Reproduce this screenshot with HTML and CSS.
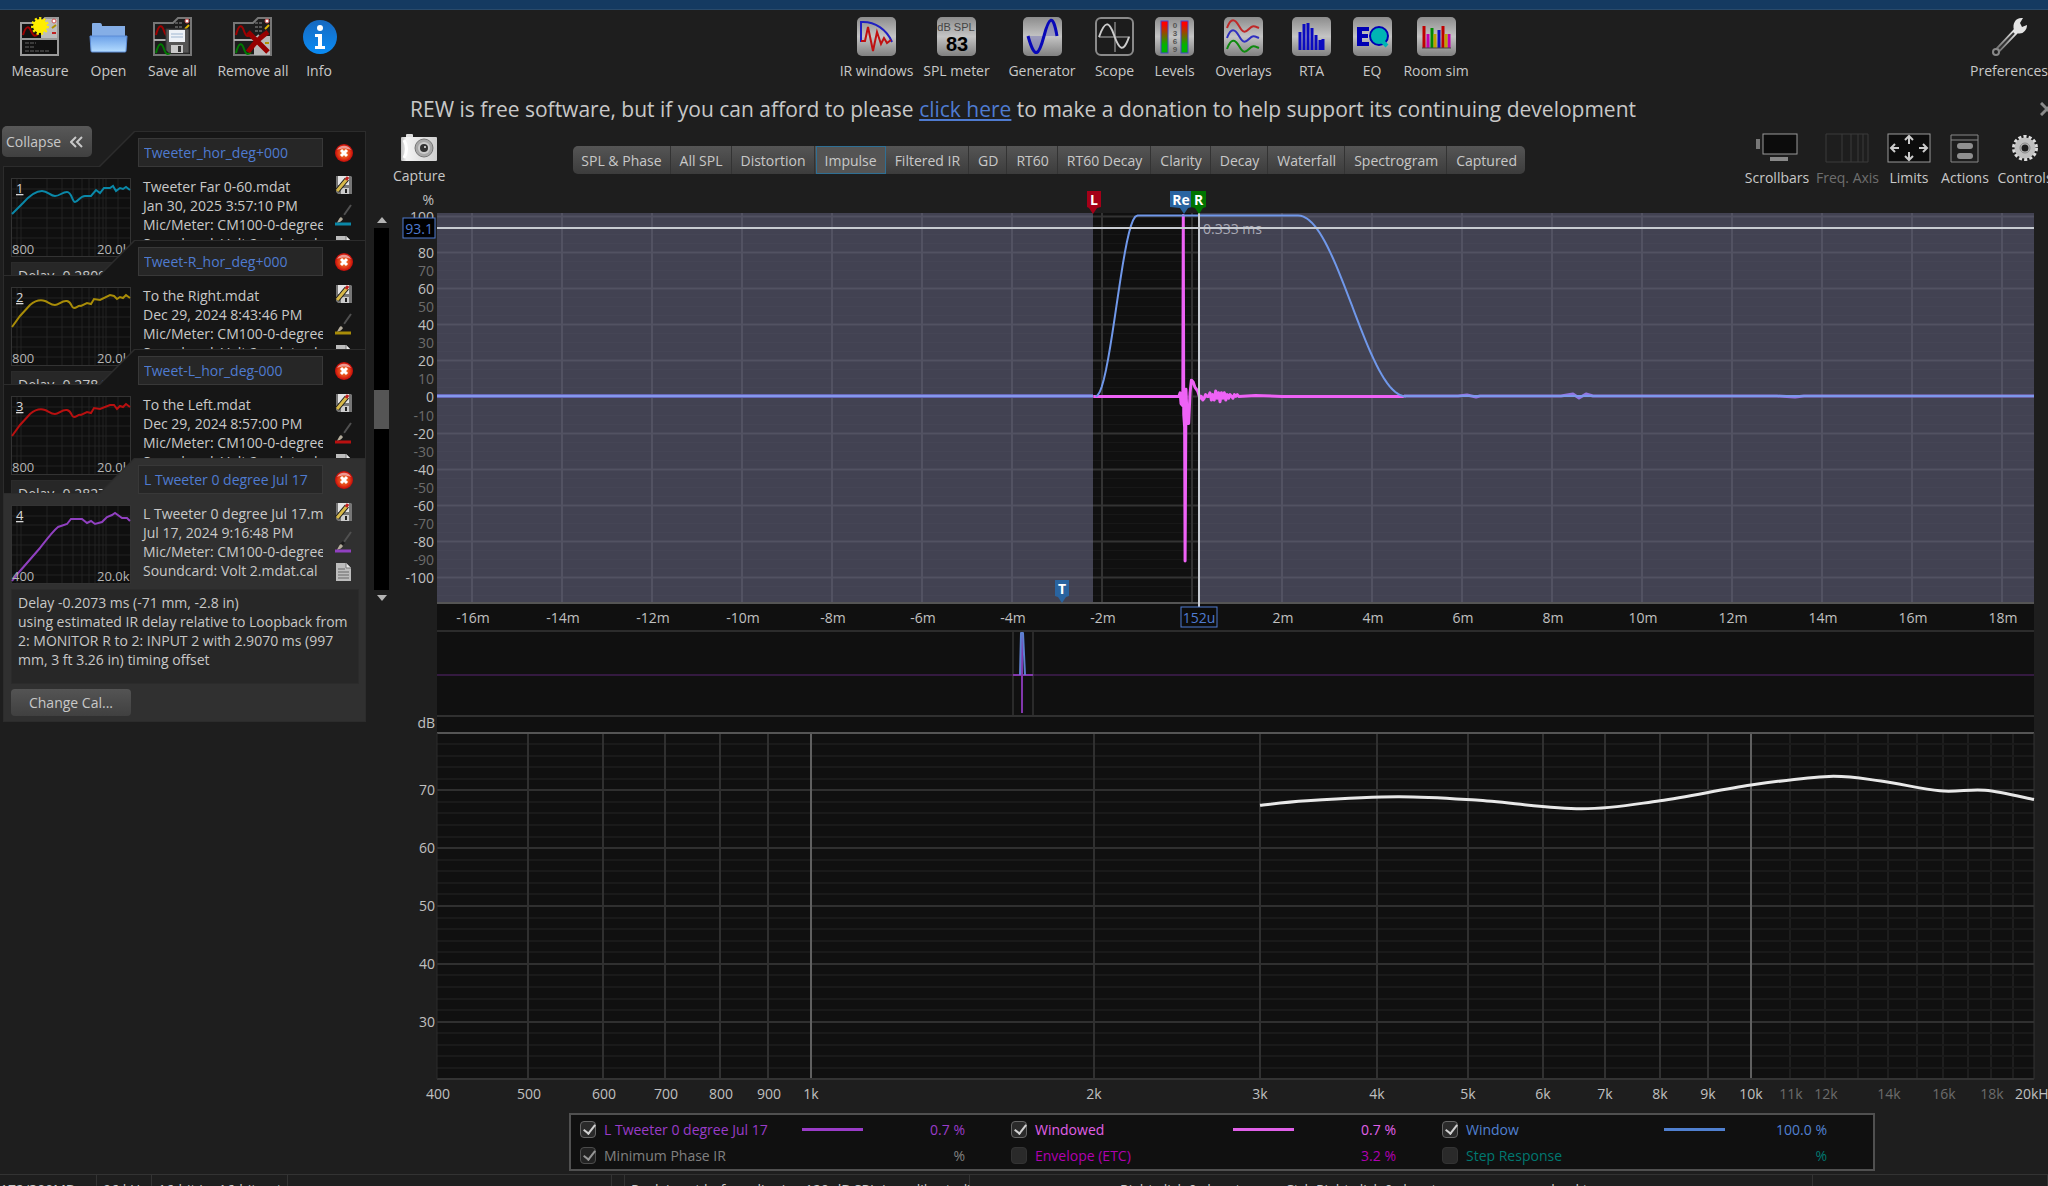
FILE: index.html
```html
<!DOCTYPE html>
<html lang="en">
<head>
    <meta charset="UTF-8">
    <meta name="viewport" content="width=device-width, initial-scale=1.0">
    <title>REW</title>
    <link rel="stylesheet" href="styles.css">
</head>
<body>

<!-- Shared gradients and icons -->
<svg class="defs" width="0" height="0" aria-hidden="true">
    <defs>
        <linearGradient id="metal" x1="0" y1="0" x2="0" y2="1">
            <stop offset="0" stop-color="#8c8c8c"/><stop offset="0.5" stop-color="#c4c4c4"/><stop offset="1" stop-color="#808080"/>
        </linearGradient>
        <linearGradient id="level" x1="0" y1="0" x2="0" y2="1">
            <stop offset="0.1" stop-color="#ff0000"/><stop offset="0.75" stop-color="#00b400"/>
        </linearGradient>
        <linearGradient id="folder" x1="0" y1="0" x2="0" y2="1">
            <stop offset="0" stop-color="#6ba0e8"/><stop offset="1" stop-color="#b4dcff"/>
        </linearGradient>
        <linearGradient id="infoBlue" x1="0" y1="0" x2="0" y2="1">
            <stop offset="0" stop-color="#1769c0"/><stop offset="1" stop-color="#0a8cf5"/>
        </linearGradient>
        <linearGradient id="steel" x1="1" y1="0" x2="0" y2="1">
            <stop offset="0" stop-color="#ffffff"/><stop offset="0.5" stop-color="#9a9a9a"/><stop offset="1" stop-color="#555555"/>
        </linearGradient>
        <linearGradient id="pad" x1="0" y1="0" x2="1" y2="0">
            <stop offset="0" stop-color="#bdbdbd"/><stop offset="0.15" stop-color="#f4f4f4"/><stop offset="1" stop-color="#d0d0d0"/>
        </linearGradient>
        <radialGradient id="redBall">
            <stop offset="0" stop-color="#f59a3a"/><stop offset="0.7" stop-color="#e03414"/><stop offset="1" stop-color="#c00a0a"/>
        </radialGradient>
    </defs>
    <symbol id="tile" viewBox="0 0 39 39"><rect width="39" height="39" rx="5" fill="url(#metal)"/></symbol>
    <symbol id="stack" viewBox="0 0 39 39">
        <path d="M1 38V6H20L25 1H38V38Z" fill="#1c1c1c" stroke="#777" stroke-width="2"/>
        <path d="M1 23H21L26 18" fill="none" stroke="#aaa" stroke-width="2"/>
        <path d="M3 18C6 6 9 8 11 14S15 20 18 17" fill="none" stroke="#a00000" stroke-width="2"/>
        <path d="M3 36C6 24 9 26 11 32S15 38 18 35" fill="none" stroke="#007a00" stroke-width="2"/>
        <path d="M22 6H29M22 10H29M22 14H29" stroke="#555" stroke-width="2" stroke-dasharray="3 1"/>
        <circle cx="34" cy="4" r="2" fill="#fff" stroke="#d05050"/>
        <path d="M32 12L36 8" stroke="#d8b000" stroke-width="2"/>
    </symbol>
    <symbol id="close" viewBox="0 0 18 18">
        <circle cx="9" cy="9" r="9" fill="url(#redBall)"/>
        <path d="M2 6A8 8 0 0 1 16 6C11 4 7 4 2 6Z" fill="#f0b0b0" opacity="0.8"/>
        <path d="M6 6L12 12M12 6L6 12" stroke="#fff" stroke-width="3"/>
    </symbol>
    <symbol id="save" viewBox="0 0 18 18">
        <path d="M1 0H16L17 1V18H3L1 16Z" fill="#777"/>
        <rect x="3" y="0" width="11" height="9" fill="#e4e4e4"/>
        <rect x="6" y="12" width="8" height="6" fill="#ccc"/><rect x="10" y="13" width="2" height="4" fill="#222"/>
        <path d="M2 15L12 3" stroke="#1c1c1c" stroke-width="5"/><path d="M2 15L12 3" stroke="#d6b84a" stroke-width="3"/>
        <path d="M11 4L13 1" stroke="#c02020" stroke-width="3"/>
    </symbol>
    <symbol id="pen" viewBox="0 0 18 22">
        <path d="M16 1L9 11" stroke="#505050" stroke-width="2"/><path d="M9 11L6 14" stroke="#1a1a1a" stroke-width="3"/>
        <path d="M6 13C4 14 3 17 2 19C5 18 7 17 8 15Z" fill="#b5ad9c"/>
        <path d="M0 20H16" stroke="currentColor" stroke-width="3"/>
    </symbol>
    <symbol id="doc" viewBox="0 0 18 18">
        <path d="M1 0H11L16 5V18H1Z" fill="#bcbcbc"/><path d="M11 0V5H16" fill="#e8e8e8" stroke="#777"/>
        <path d="M3 6H10M3 9H14M3 12H14M3 15H14" stroke="#666"/>
    </symbol>
    <symbol id="thumb-grid" viewBox="0 0 120 79">
        <rect width="120" height="79" fill="#0f0f0f"/>
        <path d="M6 0V79M10 0V79M36 0V79M51 0V79M62 0V79M71 0V79M78 0V79M84 0V79M88 0V79M92 0V79M95 0V79M107 0V79M0 11H120M0 20H120M0 30H120M0 40H120M0 50H120M0 60H120M0 70H120" stroke="#222" fill="none"/>
        <rect x="0" y="0" width="120" height="79" fill="none" stroke="#333" stroke-width="2"/>
    </symbol>
</svg>

<div class="app">
    <div class="titlebar"></div>

    <header class="toolbar">
        <div class="tools tools-file">
            <button class="tool">
                <svg width="39" height="39" viewBox="0 0 39 39">
                    <path d="M1 38V6H20L25 1H38V38Z" fill="#111" stroke="#9a9a9a" stroke-width="2"/>
                    <path d="M21 8L26 2H37V22H21Z" fill="#bdbdbd"/><path d="M1 22H38" stroke="#9a9a9a" stroke-width="2"/>
                    <path d="M3 18C6 8 9 9 11 14S15 20 18 17" fill="none" stroke="#a00000" stroke-width="2"/>
                    <path d="M5 26H16M5 30H14M5 34H30" stroke="#666" stroke-dasharray="4 1"/>
                    <circle cx="34" cy="4" r="2" fill="#fff" stroke="#d05050"/><path d="M32 11L36 8" stroke="#b09000" stroke-width="2"/><path d="M32 16H36" stroke="#c02020" stroke-width="2"/>
                    <circle cx="20" cy="9" r="7" fill="#ffee00"/><circle cx="20" cy="9" r="7" fill="none" stroke="#ffee00" stroke-width="4" stroke-dasharray="2 2"/>
                </svg>
                <span>Measure</span>
            </button>
            <button class="tool">
                <svg width="39" height="39" viewBox="0 0 39 39">
                    <path d="M3 20V7Q3 6 4 6H11Q13 6 13 9H36V20Z" fill="#85aee6"/>
                    <path d="M1 19H38L37 34Q37 35 36 35H3Q2 35 2 34Z" fill="url(#folder)" stroke="#5c8cd6"/>
                </svg>
                <span>Open</span>
            </button>
            <button class="tool">
                <svg width="39" height="39" viewBox="0 0 39 39">
                    <use href="#stack"/>
                    <path d="M13 12H35Q36 12 36 13V36H16L13 33Z" fill="#555" stroke="#333"/>
                    <rect x="16" y="13" width="16" height="12" fill="#eef2f7"/><path d="M18 17H30M18 20H30" stroke="#9fb6d0"/>
                    <rect x="18" y="28" width="12" height="8" fill="#c8c8c8"/><rect x="25" y="29" width="3" height="6" fill="#333"/>
                </svg>
                <span>Save all</span>
            </button>
            <button class="tool">
                <svg width="39" height="39" viewBox="0 0 39 39">
                    <use href="#stack"/><rect x="21" y="19" width="16" height="19" fill="#b8b8b8"/>
                    <path d="M32 26H36" stroke="#b09000" stroke-width="2"/>
                    <path d="M15 15L35 35M35 15C28 20 20 27 15 35" fill="none" stroke="#960000" stroke-width="5"/>
                </svg>
                <span>Remove all</span>
            </button>
            <button class="tool">
                <svg width="39" height="39" viewBox="0 0 39 39">
                    <circle cx="20" cy="20" r="17" fill="url(#infoBlue)"/>
                    <circle cx="20" cy="11" r="3" fill="#fff"/><path d="M15 17H22V29H25V32H15V29H18V20H15Z" fill="#fff"/>
                </svg>
                <span>Info</span>
            </button>
        </div>

        <div class="tools tools-main">
            <button class="tool">
                <svg width="39" height="39" viewBox="0 0 39 39"><use href="#tile"/>
                    <path d="M4 25V5C18 4 30 13 35 25" fill="none" stroke="#2020c0" stroke-width="2"/>
                    <path d="M4 24H8L11 10L16 34L20 15L24 27L27 21L30 26L34 23" fill="none" stroke="#c01010" stroke-width="2"/>
                </svg>
                <span>IR windows</span>
            </button>
            <button class="tool">
                <svg width="39" height="39" viewBox="0 0 39 39"><use href="#tile"/>
                    <text x="19" y="14" text-anchor="middle" class="icon-small">dB SPL</text>
                    <text x="20" y="34" text-anchor="middle" class="icon-big">83</text>
                </svg>
                <span>SPL meter</span>
            </button>
            <button class="tool">
                <svg width="39" height="39" viewBox="0 0 39 39"><use href="#tile"/>
                    <path d="M5 19H34C31 -4 26 0 21 19S12 44 5 19Z" fill="#8080b8" opacity="0.6"/>
                    <path d="M5 19C12 44 16 38 21 19S30 -4 34 19" fill="none" stroke="#0808b8" stroke-width="3"/>
                </svg>
                <span>Generator</span>
            </button>
            <button class="tool">
                <svg width="39" height="39" viewBox="0 0 39 39">
                    <rect x="1" y="1" width="37" height="37" rx="5" fill="#1c1c1c" stroke="#8a8a8a" stroke-width="2"/>
                    <path d="M20 5V35M4 20H35" stroke="#666" stroke-width="2"/>
                    <path d="M4 20C10 3 14 4 19 18S28 37 34 20" fill="none" stroke="#ccc" stroke-width="2"/>
                </svg>
                <span>Scope</span>
            </button>
            <button class="tool">
                <svg width="39" height="39" viewBox="0 0 39 39"><use href="#tile"/>
                    <rect x="6" y="4" width="7" height="32" fill="url(#level)" stroke="#4646c8"/>
                    <rect x="26" y="4" width="7" height="32" fill="url(#level)" stroke="#4646c8"/>
                    <text x="20" y="11" text-anchor="middle" class="icon-tiny">0</text>
                    <text x="20" y="19" text-anchor="middle" class="icon-tiny">3</text>
                    <text x="20" y="27" text-anchor="middle" class="icon-tiny">6</text>
                    <text x="20" y="35" text-anchor="middle" class="icon-tiny">9</text>
                </svg>
                <span>Levels</span>
            </button>
            <button class="tool">
                <svg width="39" height="39" viewBox="0 0 39 39"><use href="#tile"/>
                    <path d="M3 11C7 0 11 2 15 9S21 16 25 12S30 9 35 11" fill="none" stroke="#c02828" stroke-width="2"/>
                    <path d="M3 21C7 10 11 12 15 19S21 26 25 22S30 19 35 21" fill="none" stroke="#3030c0" stroke-width="2"/>
                    <path d="M3 32C7 21 11 22 15 29S21 36 25 32S30 29 35 31" fill="none" stroke="#108a10" stroke-width="2"/>
                </svg>
                <span>Overlays</span>
            </button>
            <button class="tool">
                <svg width="39" height="39" viewBox="0 0 39 39"><use href="#tile"/>
                    <path d="M8 33V15M12 33V7M16 33V6M20 33V11M24 33V18M28 33V23M31 33V22" stroke="#0a0ac0" stroke-width="3"/>
                </svg>
                <span>RTA</span>
            </button>
            <button class="tool">
                <svg width="39" height="39" viewBox="0 0 39 39"><use href="#tile"/>
                    <path d="M4 10H16V14H9V17H15V21H9V25H16V29H4Z" fill="#0000b4"/>
                    <circle cx="26" cy="19" r="9" fill="#00b4b4" stroke="#0000b4" stroke-width="2"/><path d="M28 23L34 29" stroke="#00b4b4" stroke-width="4"/>
                </svg>
                <span>EQ</span>
            </button>
            <button class="tool">
                <svg width="39" height="39" viewBox="0 0 39 39"><use href="#tile"/>
                    <path d="M7 31V9M26 31V9" stroke="#c00000" stroke-width="3"/><path d="M11 31V17M32 31V17" stroke="#c000b0" stroke-width="3"/>
                    <path d="M15 31V11" stroke="#008a00" stroke-width="3"/><path d="M18 31V17M29 31V17" stroke="#c0a000" stroke-width="3"/><path d="M22 31V13" stroke="#1010c0" stroke-width="3"/>
                    <path d="M5 31H34" stroke="#444"/>
                </svg>
                <span>Room sim</span>
            </button>
        </div>

        <button class="tool">
            <svg width="39" height="39" viewBox="0 0 39 39">
                <path d="M4 33L24 12L28 16L8 37Q5 39 3 37T4 33Z" fill="url(#steel)"/><path d="M9 32L24 16" stroke="#333" stroke-width="2"/>
                <path d="M24 13C22 6 26 0 33 1L30 6L32 10L37 8C37 14 32 18 27 16Z" fill="#e4e4e4"/>
                <circle cx="6" cy="35" r="3" fill="#1e1e1e" stroke="#888" stroke-width="2"/>
            </svg>
            <span>Preferences</span>
        </button>
    </header>

    <div class="donate">
        <p>REW is free software, but if you can afford to please <a href="#donate">click here</a> to make a donation to help support its continuing development</p>
        <button class="donate-close" aria-label="Close">
            <svg width="14" height="14" viewBox="0 0 14 14"><path d="M1 1L13 13M13 1L1 13" stroke="#8a8a8a" stroke-width="3"/></svg>
        </button>
    </div>

    <div class="workspace">
        <aside class="sidebar">
            <div class="measurements">
                <button class="collapse">Collapse
                    <svg width="14" height="12" viewBox="0 0 14 12"><path d="M6 1L1 6L6 11M12 1L7 6L12 11" fill="none" stroke="#c8c8c8" stroke-width="2"/></svg>
                </button>
                <div class="cards">
                    <section class="card card-blue">
                        <input class="card-title" type="text" value="Tweeter_hor_deg+000" aria-label="Measurement 1 name">
                        <button class="icon-btn card-close" aria-label="Remove measurement 1"><svg width="18" height="18"><use href="#close"/></svg></button>
                        <svg class="thumb" viewBox="0 0 120 79">
                            <use href="#thumb-grid"/>
                            <path class="curve" d="M1 36L12 25C20 16 25 13 31 13S39 18 44 18S51 14 56 14S61 24 64 24S69 18 74 18H80L85 12L89 15L93 10H99L102 8L105 13L109 10L112 11L115 9L119 12"/>
                            <text class="index" x="5" y="15">1</text><text x="1" y="76">800</text><text x="86" y="76">20.0k</text>
                        </svg>
                        <div class="card-info"><div>Tweeter Far 0-60.mdat</div><div>Jan 30, 2025 3:57:10 PM</div><div>Mic/Meter: CM100-0-degree</div><div>Soundcard: Volt 2.mdat.cal</div></div>
                        <div class="card-icons">
                            <button class="icon-btn" aria-label="Save"><svg width="18" height="18"><use href="#save"/></svg></button>
                            <button class="icon-btn" aria-label="Colour"><svg width="18" height="22"><use href="#pen"/></svg></button>
                            <button class="icon-btn" aria-label="Notes"><svg width="18" height="18"><use href="#doc"/></svg></button>
                        </div>
                        <div class="delay">Delay -0.2809</div>
                    </section>

                    <section class="card card-yellow">
                        <input class="card-title" type="text" value="Tweet-R_hor_deg+000" aria-label="Measurement 2 name">
                        <button class="icon-btn card-close" aria-label="Remove measurement 2"><svg width="18" height="18"><use href="#close"/></svg></button>
                        <svg class="thumb" viewBox="0 0 120 79">
                            <use href="#thumb-grid"/>
                            <path class="curve" d="M1 40L9 29L19 18C25 13 31 13 34 14S40 18 44 18S51 13 56 14S60 21 63 21S67 18 70 19L76 16L80 17L83 12L89 13L99 8L103 9L106 12L109 10L112 11L115 8L119 11"/>
                            <text class="index" x="5" y="15">2</text><text x="1" y="76">800</text><text x="86" y="76">20.0k</text>
                        </svg>
                        <div class="card-info"><div>To the Right.mdat</div><div>Dec 29, 2024 8:43:46 PM</div><div>Mic/Meter: CM100-0-degree</div><div>Soundcard: Volt 2.mdat.cal</div></div>
                        <div class="card-icons">
                            <button class="icon-btn" aria-label="Save"><svg width="18" height="18"><use href="#save"/></svg></button>
                            <button class="icon-btn" aria-label="Colour"><svg width="18" height="22"><use href="#pen"/></svg></button>
                            <button class="icon-btn" aria-label="Notes"><svg width="18" height="18"><use href="#doc"/></svg></button>
                        </div>
                        <div class="delay">Delay -0.2784</div>
                    </section>

                    <section class="card card-red">
                        <input class="card-title" type="text" value="Tweet-L_hor_deg-000" aria-label="Measurement 3 name">
                        <button class="icon-btn card-close" aria-label="Remove measurement 3"><svg width="18" height="18"><use href="#close"/></svg></button>
                        <svg class="thumb" viewBox="0 0 120 79">
                            <use href="#thumb-grid"/>
                            <path class="curve" d="M1 40L9 29L19 18C25 13 31 13 34 14S40 18 44 18S51 13 56 14S60 21 63 21S67 18 70 19L76 16L80 17L83 12L89 13L99 9L103 9L106 13L109 10L112 11L115 8L119 11"/>
                            <text class="index" x="5" y="15">3</text><text x="1" y="76">800</text><text x="86" y="76">20.0k</text>
                        </svg>
                        <div class="card-info"><div>To the Left.mdat</div><div>Dec 29, 2024 8:57:00 PM</div><div>Mic/Meter: CM100-0-degree</div><div>Soundcard: Volt 2.mdat.cal</div></div>
                        <div class="card-icons">
                            <button class="icon-btn" aria-label="Save"><svg width="18" height="18"><use href="#save"/></svg></button>
                            <button class="icon-btn" aria-label="Colour"><svg width="18" height="22"><use href="#pen"/></svg></button>
                            <button class="icon-btn" aria-label="Notes"><svg width="18" height="18"><use href="#doc"/></svg></button>
                        </div>
                        <div class="delay">Delay -0.2827</div>
                    </section>

                    <section class="card card-purple active">
                        <input class="card-title" type="text" value="L Tweeter 0 degree Jul 17" aria-label="Measurement 4 name">
                        <button class="icon-btn card-close" aria-label="Remove measurement 4"><svg width="18" height="18"><use href="#close"/></svg></button>
                        <svg class="thumb" viewBox="0 0 120 79">
                            <use href="#thumb-grid"/>
                            <path class="curve" d="M1 76L9 66L29 43C36 34 42 26 47 22L56 19L60 14H71L76 18L80 16L84 19L91 17L96 12L101 10L104 8L111 13H116L119 16"/>
                            <text class="index" x="5" y="15">4</text><text x="1" y="76">400</text><text x="86" y="76">20.0k</text>
                        </svg>
                        <div class="card-info"><div>L Tweeter 0 degree Jul 17.mdat</div><div>Jul 17, 2024 9:16:48 PM</div><div>Mic/Meter: CM100-0-degree</div><div>Soundcard: Volt 2.mdat.cal</div></div>
                        <div class="card-icons">
                            <button class="icon-btn" aria-label="Save"><svg width="18" height="18"><use href="#save"/></svg></button>
                            <button class="icon-btn" aria-label="Colour"><svg width="18" height="22"><use href="#pen"/></svg></button>
                            <button class="icon-btn" aria-label="Notes"><svg width="18" height="18"><use href="#doc"/></svg></button>
                        </div>
                        <div class="delay">Delay -0.2073 ms (-71 mm, -2.8 in)<br>using estimated IR delay relative to Loopback from<br>2: MONITOR R to 2: INPUT 2 with 2.9070 ms (997<br>mm, 3 ft 3.26 in) timing offset</div>
                        <button class="change-cal">Change Cal...</button>
                    </section>
                </div>
            </div>

            <div class="scroller">
                <svg width="10" height="6" viewBox="0 0 10 6"><path d="M0 6L5 0L10 6Z" fill="#b4b4b4"/></svg>
                <div class="track"><div class="handle"></div></div>
                <svg width="10" height="6" viewBox="0 0 10 6"><path d="M0 0L5 6L10 0Z" fill="#b4b4b4"/></svg>
            </div>
        </aside>

        <main class="main">
            <div class="graph-bar">
                <button class="tool capture">
                    <svg width="36" height="27" viewBox="0 0 36 27">
                        <path d="M5 3V1Q5 0 6 0H11Q12 0 12 1V3Z" fill="#ddd"/><rect x="0" y="3" width="36" height="24" rx="1" fill="url(#pad)"/>
                        <path d="M3 6Q8 15 3 24" fill="none" stroke="#fff" stroke-width="3"/>
                        <circle cx="23" cy="14" r="9" fill="#a8a8a8" stroke="#777"/><circle cx="23" cy="14" r="6" fill="#ccc"/><circle cx="23" cy="14" r="4" fill="#333"/><circle cx="24" cy="13" r="1" fill="#eee"/>
                    </svg>
                    <span>Capture</span>
                </button>

                <nav class="tabs">
                    <button>SPL &amp; Phase</button>
                    <button>All SPL</button>
                    <button>Distortion</button>
                    <button class="selected">Impulse</button>
                    <button>Filtered IR</button>
                    <button>GD</button>
                    <button>RT60</button>
                    <button>RT60 Decay</button>
                    <button>Clarity</button>
                    <button>Decay</button>
                    <button>Waterfall</button>
                    <button>Spectrogram</button>
                    <button>Captured</button>
                </nav>

                <div class="graph-tools">
                    <button class="tool">
                        <svg width="44" height="30" viewBox="0 0 44 30">
                            <rect x="8" y="1" width="34" height="20" fill="#0c0c0c" stroke="#999"/><rect x="1" y="6" width="4" height="10" fill="#777"/><rect x="15" y="24" width="18" height="4" fill="#888"/>
                        </svg>
                        <span>Scrollbars</span>
                    </button>
                    <button class="tool" disabled>
                        <svg width="44" height="30" viewBox="0 0 44 30"><path d="M1 1H43V29H1ZM17 1V29M26 1V29M33 1V29M38 1V29" fill="none" stroke="#3a3a3a"/></svg>
                        <span>Freq. Axis</span>
                    </button>
                    <button class="tool">
                        <svg width="44" height="30" viewBox="0 0 44 30">
                            <rect x="1" y="1" width="42" height="28" fill="#0c0c0c" stroke="#999"/>
                            <path d="M22 11V3M18 7L22 3L26 7M22 19V27M18 23L22 27L26 23M12 15H4M8 11L4 15L8 19M32 15H40M36 11L40 15L36 19" fill="none" stroke="#ccc" stroke-width="2"/>
                        </svg>
                        <span>Limits</span>
                    </button>
                    <button class="tool">
                        <svg width="30" height="30" viewBox="0 0 30 30">
                            <path d="M1 2H28V29H1ZM1 7H28" fill="none" stroke="#888"/><rect x="7" y="10" width="16" height="6" rx="3" fill="#909090"/><rect x="7" y="20" width="16" height="6" rx="3" fill="#909090"/>
                        </svg>
                        <span>Actions</span>
                    </button>
                    <button class="tool">
                        <svg width="30" height="30" viewBox="0 0 30 30">
                            <circle cx="15" cy="15" r="11" fill="none" stroke="#ddd" stroke-width="4" stroke-dasharray="3 2"/>
                            <circle cx="15" cy="15" r="7" fill="none" stroke="#c0c0c0" stroke-width="7"/><circle cx="15" cy="15" r="5" fill="none" stroke="#888" stroke-width="1"/>
                        </svg>
                        <span>Controls</span>
                    </button>
                </div>
            </div>

            <svg class="plot plot-impulse" id="impulse"></svg>
            <svg class="plot plot-overview" id="overview"></svg>
            <svg class="plot plot-response" id="response"></svg>

            <div class="legend">
                <div class="trace purple">
                    <label><input type="checkbox" checked>L Tweeter 0 degree Jul 17</label><span class="swatch"></span><output>0.7 %</output>
                </div>
                <div class="trace pink">
                    <label><input type="checkbox" checked>Windowed</label><span class="swatch"></span><output>0.7 %</output>
                </div>
                <div class="trace blue">
                    <label><input type="checkbox" checked>Window</label><span class="swatch"></span><output>100.0 %</output>
                </div>
                <div class="trace grey">
                    <label><input type="checkbox" checked>Minimum Phase IR</label><span></span><output>%</output>
                </div>
                <div class="trace magenta">
                    <label><input type="checkbox">Envelope (ETC)</label><span></span><output>3.2 %</output>
                </div>
                <div class="trace teal">
                    <label><input type="checkbox">Step Response</label><span></span><output>%</output>
                </div>
            </div>
        </main>
    </div>

    <footer class="status">
        <span>172/300MB</span>
        <span>96 kHz</span>
        <span>16-bit in, 16-bit out</span>
        <span></span>
        <span></span>
        <span>Peak input before clipping 120 dB SPL (uncalibrated)</span>
        <span class="hint">Right click &amp; drag to pan; Ctrl+Right click &amp; drag to zoom; mouse wheel to zoom;</span>
        <span></span>
    </footer>
</div>

<script src="graphs.js"></script>
</body>
</html>
```
FILE: styles.css
```css
* {
    box-sizing: border-box;
}
body {
    margin: 0;
    background-color: #1e1e1e;
    color: #c8c8c8;
    font-family: "Open Sans", "Noto Sans", sans-serif;
    font-size: 14px;
    line-height: 19px;
}
button, input {
    font: inherit;
    color: inherit;
}
button {
    padding: 0;
    border: none;
    background: none;
    white-space: nowrap;
}
svg {
    display: block;
}
.defs {
    position: absolute;
}
.app {
    display: flex;
    flex-direction: column;
    height: 100vh;
    overflow: hidden;
}
.titlebar {
    height: 10px;
    flex: none;
    background-color: #153a61;
    border-bottom: 1px solid #2a4a6a;
}

/* Main toolbar */
.toolbar {
    display: flex;
    flex: none;
    height: 82px;
    padding: 7px 0 0 10px;
}
.tools {
    display: grid;
}
.tools-file {
    grid-template-columns: 60px 77px 51px 110px 22px;
}
.tools-main {
    flex: 1;
    justify-content: center;
    grid-template-columns: 84px 76px 95px 50px 70px 68px 68px 53px 75px;
    padding-left: 8px;
}
.tool {
    display: flex;
    flex-direction: column;
    align-items: center;
    align-self: start;
    justify-self: center;
    gap: 5px;
}
.tool:disabled {
    color: #6e6e6e;
}
.icon-small {
    font: 11px "Liberation Sans", sans-serif;
    fill: #444;
}
.icon-big {
    font: bold 20px "Liberation Sans", sans-serif;
    fill: #000;
}
.icon-tiny {
    font: bold 8px "Liberation Sans", sans-serif;
    fill: #555;
}

/* Donation message */
.donate {
    display: flex;
    flex: none;
    justify-content: space-between;
    align-items: center;
    height: 34px;
    padding-left: 410px;
    margin-right: -6px;
    font-size: 21px;
    line-height: 30px;
}
.donate p {
    margin: 0;
    white-space: nowrap;
}
.donate a {
    color: #4f7bd0;
}

/* Measurement list */
.workspace {
    display: flex;
    flex: 1;
    min-height: 0;
}
.sidebar {
    display: flex;
    flex: none;
    width: 396px;
}
.measurements {
    width: 366px;
    padding-left: 2px;
}
.collapse {
    display: flex;
    align-items: center;
    justify-content: space-between;
    width: 90px;
    height: 31px;
    padding: 0 8px 0 4px;
    border-radius: 5px;
    background: linear-gradient(#585858, #404040);
}
.cards {
    display: grid;
    grid-auto-rows: 109px;
    margin: -26px 0 0 1px;
}
.card {
    --shape: polygon(131px 0, 100% 0, 100% 100%, 0 100%, 0 35px, 96px 35px);
    position: relative;
    isolation: isolate;
    display: grid;
    grid-template-columns: 120px 185px 1fr;
    grid-template-rows: 29px 79px 95px 27px;
    column-gap: 7px;
    height: 264px;
    padding: 7px 7px 6px 8px;
    background-color: #2c2c2c;
    clip-path: var(--shape);
}
.card::before {
    content: "";
    position: absolute;
    inset: 1px;
    z-index: -1;
    background-color: #161616;
    clip-path: var(--shape);
}
.card.active::before {
    background-color: #303030;
}
.card-title {
    grid-column: 2;
    width: 100%;
    padding: 0 5px;
    border: 1px solid #383838;
    background-color: #262626;
    color: #4f7bd0;
}
.card-close {
    margin: 6px 0 0 5px;
    align-self: start;
}
.icon-btn {
    width: 18px;
}
.thumb {
    grid-column: 1;
    width: 120px;
    height: 79px;
    margin-top: 11px;
}
.thumb text {
    font-size: 13px;
    fill: #b4b4b4;
}
.thumb .index {
    text-decoration: underline;
    fill: #d8d8d8;
}
.curve {
    fill: none;
    stroke: currentColor;
    stroke-width: 2;
}
.card-blue .curve, .card-blue .card-icons {
    color: #0a88a8;
}
.card-yellow .curve, .card-yellow .card-icons {
    color: #a88c08;
}
.card-red .curve, .card-red .card-icons {
    color: #b81010;
}
.card-purple .curve, .card-purple .card-icons {
    color: #9040c0;
}
.card-info {
    height: 78px;
    margin-top: 10px;
    padding-left: 5px;
    overflow: hidden;
    white-space: nowrap;
}
.card-icons {
    display: flex;
    flex-direction: column;
    gap: 10px;
    margin-top: 9px;
    padding-left: 5px;
}
.delay {
    grid-column: 1 / -1;
    margin-top: 16px;
    height: 95px;
    padding: 3px 6px;
    border: 1px solid #2b2b2b;
    background-color: #272727;
    white-space: nowrap;
    overflow: hidden;
}
.change-cal {
    height: 27px;
    margin-top: 21px;
    border-radius: 4px;
    background: linear-gradient(#545454, #404040);
}
.scroller {
    display: flex;
    flex-direction: column;
    align-items: center;
    gap: 5px;
    width: 15px;
    height: 384px;
    margin: 91px 0 0 8px;
}
.track {
    flex: 1;
    width: 100%;
    padding-top: 162px;
    background-color: #000;
}
.handle {
    height: 39px;
    background-color: #555;
}

/* Graph area */
.main {
    display: flex;
    flex: 1;
    flex-direction: column;
    min-width: 0;
}
.graph-bar {
    display: flex;
    flex: none;
    height: 64px;
    justify-content: space-between;
    margin-left: -3px;
}
.capture {
    margin-top: 8px;
    gap: 5px;
}
.tabs {
    display: flex;
    gap: 1px;
    height: 28px;
    margin: 20px auto 0 128px;
    border-radius: 5px;
    background: linear-gradient(#555, #3c3c3c);
}
.tabs button {
    padding: 0 8px;
    border-right: 1px solid #333;
}
.tabs button:last-child {
    border-right: none;
}
.tabs .selected {
    border: 1px solid #2f6f94;
    background-color: #545454;
}
.graph-tools {
    display: grid;
    grid-template-columns: 72px 69px 54px 58px 62px;
    margin: 7px -8px 0 0;
}
.plot {
    width: 100%;
    min-height: 0;
}
.plot-impulse {
    flex: 442 1 0;
}
.plot-overview {
    flex: none;
    height: 85px;
}
.plot-response {
    flex: 389 1 0;
}
.plot text {
    font-size: 14px;
    fill: #c0c0c0;
}
.plot .dim {
    fill: #6c6c6c;
}
.plot .readout {
    fill: #4f7bd0;
}
.plot .flag {
    font-weight: bold;
    fill: #fff;
}
.plot .cursor-time {
    fill: #a8a8b4;
}
.plot path {
    fill: none;
}

/* Legend */
.legend {
    display: grid;
    flex: none;
    grid-template-columns: repeat(3, 1fr);
    width: 79%;
    min-width: 1306px;
    height: 58px;
    margin: 7px auto 3px;
    padding: 1px 0 1px 9px;
    border: 2px solid #505050;
    background-color: #101010;
}
.trace {
    display: grid;
    grid-template-columns: 222px 61px 102px;
    align-items: center;
}
.trace label {
    display: flex;
    align-items: center;
    gap: 8px;
}
.trace input {
    appearance: none;
    width: 16px;
    height: 17px;
    margin: 0;
    border: 1px solid #333;
    border-radius: 4px;
    background-color: #2a2a2a;
}
.trace input:checked {
    border-color: #666;
}
.trace input:checked::after {
    content: "";
    display: block;
    width: 5px;
    height: 10px;
    margin: 0 0 0 5px;
    border: solid #d0d0d0;
    border-width: 0 2px 2px 0;
    transform: rotate(38deg);
}
.trace.grey input {
    opacity: 0.7;
}
.swatch {
    height: 3px;
    background-color: currentColor;
}
.trace output {
    text-align: right;
}
.purple {
    color: #9a3cc8;
}
.pink {
    color: #e060e8;
}
.blue {
    color: #5080d0;
}
.grey {
    color: #808080;
}
.magenta {
    color: #b000b0;
}
.teal {
    color: #007870;
}

/* Status bar */
.status {
    display: grid;
    flex: none;
    grid-template-columns: 97px 55px 136px 324px 13px 345px 1fr 235px;
    height: 12px;
    border-top: 1px solid #333;
    overflow: hidden;
}
.status span {
    height: 30px;
    padding: 5px 6px 0;
    border-right: 1px solid #333;
    white-space: nowrap;
}
.status span:first-child {
    padding-left: 0;
}
.status .hint {
    padding-left: 150px;
}
```
FILE: graphs.js
```js
const MARGIN_LEFT = 41;
const MARGIN_RIGHT = 14;

// Build one SVG tag as a string
function line(x1, y1, x2, y2, color, width = 1) {
    return `<path d="M${x1} ${y1}L${x2} ${y2}" stroke="${color}" stroke-width="${width}"/>`;
}

function rect(x, y, w, h, fill, stroke = 'none') {
    return `<rect x="${x}" y="${y}" width="${w}" height="${h}" fill="${fill}" stroke="${stroke}"/>`;
}

function label(x, y, text, anchor = 'middle', cls = '') {
    return `<text x="${x}" y="${y}" text-anchor="${anchor}" class="${cls}">${text}</text>`;
}

function curve(points, color, width = 2) {
    return `<path d="M${points.map(p => p.join(' ')).join('L')}" stroke="${color}" stroke-width="${width}" stroke-linejoin="round"/>`;
}

function flag(left, right, tip, top, text, color) {
    return `<polygon points="${left},${top} ${right},${top} ${right},${top + 16} ${tip + 4},${top + 17} ${tip},${top + 23} ${tip - 4},${top + 17} ${left},${top + 16}" fill="${color}"/>`
        + label((left + right) / 2, top + 14, text, 'middle', 'flag');
}

function drawImpulse() {
    const svg = document.getElementById('impulse');
    const width = svg.clientWidth;
    const height = svg.clientHeight;
    const right = width - MARGIN_RIGHT;
    const top = 23;
    const bottom = height - 29;
    const rawX = ms => MARGIN_LEFT + (ms + 16.78) / 35.48 * (right - MARGIN_LEFT);
    const rawY = pct => top + (101.4 - pct) / 215.6 * (bottom - top);
    const x = ms => Math.round(rawX(ms));
    const y = pct => Math.round(rawY(pct));
    const windowStart = x(-2.2);
    const cursorX = x(0.152);
    const cursorY = y(93.1);
    let out = '';

    out += rect(MARGIN_LEFT, top, right - MARGIN_LEFT, height - top, '#101010');
    for (let v = -110; v <= 100; v += 5) {
        out += line(MARGIN_LEFT, y(v) + 0.5, right, y(v) + 0.5, v % 20 ? '#181818' : '#333', v % 20 ? 1 : 2);
    }
    for (let v = -16; v <= 18; v += 2) {
        out += line(x(v), top, x(v), bottom, '#333', 2);
        if (v !== 0) out += label(x(v) + 1, bottom + 20, v + 'm');
    }
    out += `<g opacity="0.55">${rect(MARGIN_LEFT, top, windowStart - MARGIN_LEFT, bottom - top, '#6c6c88')}${rect(cursorX, top, right - cursorX, bottom - top, '#6c6c88')}</g>`;
    out += line(MARGIN_LEFT, bottom, right, bottom, '#555', 2);
    out += line(MARGIN_LEFT, height - 1, right, height - 1, '#2c2c2c', 2);

    for (let v = -100; v <= 100; v += 10) {
        if (v !== 90) out += label(MARGIN_LEFT - 3, y(v) + 6, v, 'end', v % 20 ? 'dim' : '');
    }
    out += label(MARGIN_LEFT - 3, 15, '%', 'end');

    // Measured response outside the window
    out += line(MARGIN_LEFT, y(0), windowStart, y(0), '#6a68b8', 4);
    out += line(MARGIN_LEFT, y(0), windowStart, y(0), '#8398ec', 2);

    // Windowed impulse, [ms, percent]
    const impulse = [[-2.2, 0], [-0.3, 0], [-0.27, 2], [-0.25, -4], [-0.22, -5], [-0.21, 3], [-0.2, 100], [-0.19, -10], [-0.17, -17],
        [-0.16, -91], [-0.14, 4], [-0.11, -15], [-0.08, -15], [-0.05, 2], [-0.02, 9], [0.02, 8], [0.06, 5], [0.12, 3], [0.17, -1]];
    const noise = [0, -2, -1, 1, 0, 0, 2, -2, 1, -2, 3, -1, 2, -3, 2, -1, 2, -2, 1, -1, 1, 0, -1, 1, 0, 1, 0];
    noise.forEach((v, i) => impulse.push([0.2 + i * 0.032, v]));
    impulse.push([1.4, 0.5], [2, 0], [4.7, 0]);
    out += curve(impulse.map(p => [rawX(p[0]), rawY(p[1])]), '#ee62f6', 3);

    // Window: raised cosine on both sides
    const win = [];
    for (let i = 0; i <= 20; i++) win.push([rawX(-2.15 + 0.93 * i / 20), rawY(50 - 50 * Math.cos(Math.PI * i / 20))]);
    for (let i = 0; i <= 40; i++) win.push([rawX(2.35 + 2.4 * i / 40), rawY(50 + 50 * Math.cos(Math.PI * i / 40))]);
    out += curve(win, '#7098ea', 2);
    out += curve([[x(4.7), y(0)], [x(5.9), y(0)], [x(6.1), y(0) - 1], [x(6.3), y(0) + 1], [x(6.4), y(0)], [x(8.2), y(0)], [x(8.45), y(0) - 2],
        [x(8.6), y(0) + 2], [x(8.75), y(0) - 2], [x(8.9), y(0)], [x(13), y(0)], [x(13.4), y(0) + 1], [x(13.6), y(0)], [right, y(0)]], '#9278e4', 3);
    out += line(x(4.7), y(0), right, y(0), '#7c98ec', 2);

    // Cursor
    out += label(cursorX + 4, cursorY + 6, '0.333 ms', 'start', 'cursor-time');
    out += line(MARGIN_LEFT, cursorY, right, cursorY, '#c8ccd2', 2);
    out += line(cursorX, top, cursorX, bottom + 4, '#c8ccd2', 2);
    out += rect(7, cursorY - 10, 32, 20, '#000', '#4f7bd0') + label(37, cursorY + 6, '93.1', 'end', 'readout');
    out += rect(cursorX - 18, bottom + 4, 36, 20, '#0c0c0c', '#4f7bd0') + label(cursorX, bottom + 20, '152u', 'middle', 'readout');

    out += flag(windowStart - 6, windowStart + 8, windowStart, 1, 'L', '#a50018');
    out += flag(cursorX - 29, cursorX - 7, cursorX - 15, 1, 'Re', '#2964a0');
    out += flag(cursorX - 8, cursorX + 7, cursorX, 1, 'R', '#007400');
    out += flag(x(-2.9) - 7, x(-2.9) + 7, x(-2.9), bottom - 23, 'T', '#2964a0');
    svg.innerHTML = out;
}

function drawOverview() {
    const svg = document.getElementById('overview');
    const width = svg.clientWidth;
    const height = svg.clientHeight;
    const right = width - MARGIN_RIGHT;
    const center = Math.round(MARGIN_LEFT + (right - MARGIN_LEFT) * 0.3665);
    let out = rect(MARGIN_LEFT, 0, right - MARGIN_LEFT, height, '#101010');
    out += line(MARGIN_LEFT, 43, right, 43, '#341a40', 2);
    out += line(center - 9, 0, center - 9, height, '#444') + line(center + 11, 0, center + 11, height, '#444');
    out += line(center - 9, 43, center + 11, 43, '#8236ac', 2);
    out += line(center, 1, center, 81, '#8236ac', 2);
    out += curve([[center - 2, 43], [center - 1, 1], [center + 1, 1], [center + 3, 43]], '#5c80d0', 2);
    out += line(MARGIN_LEFT, height - 1, right, height - 1, '#303030', 2);
    svg.innerHTML = out;
}

function drawResponse() {
    const svg = document.getElementById('response');
    const width = svg.clientWidth;
    const height = svg.clientHeight;
    const right = width - MARGIN_RIGHT;
    const top = 16;
    const bottom = height - 27;
    const x = hz => Math.round(MARGIN_LEFT + Math.log(hz / 400) / Math.log(50) * (right - MARGIN_LEFT));
    const y = db => top + (79.9 - db) / 59.8 * (bottom - top);
    let out = rect(MARGIN_LEFT, 0, right - MARGIN_LEFT, bottom, '#101010');

    for (let hz = 11000; hz < 20000; hz += 1000) {
        out += line(x(hz), top, x(hz), bottom, '#1e1e1e', 2);
    }
    for (let db = 22; db < 80; db += 2) {
        out += line(MARGIN_LEFT, Math.round(y(db)), right, Math.round(y(db)), db % 10 ? '#1a1a1a' : '#303030', 2);
        if (db % 10 === 0) out += label(MARGIN_LEFT - 2, Math.round(y(db)) + 5, db, 'end');
    }
    [500, 600, 700, 800, 900, 1000, 2000, 3000, 4000, 5000, 6000, 7000, 8000, 9000, 10000].forEach(hz => {
        const decade = hz === 1000 || hz === 10000;
        out += line(x(hz), top, x(hz), bottom, decade ? '#606060' : '#303030', 2);
    });
    out += line(MARGIN_LEFT, top, right, top, '#555', 2) + line(MARGIN_LEFT, bottom, right, bottom, '#333', 2);
    out += line(right, top, right, bottom, '#333') + line(MARGIN_LEFT, top, MARGIN_LEFT, bottom, '#2a2a2a');

    [400, 500, 600, 700, 800, 900].forEach(hz => out += label(x(hz) + 1, bottom + 20, hz));
    [1, 2, 3, 4, 5, 6, 7, 8, 9, 10].forEach(k => out += label(x(k * 1000), bottom + 20, k + 'k'));
    [11, 12, 14, 16, 18].forEach(k => out += label(x(k * 1000) + 1, bottom + 20, k + 'k', 'middle', 'dim'));
    out += label(right - 19, bottom + 20, '20kHz', 'start');
    out += label(MARGIN_LEFT - 2, 11, 'dB', 'end');

    // Response, [Hz, dB]
    const data = [[3000, 67.4], [3370, 68.2], [4210, 68.9], [5100, 68.3], [6590, 66.8], [8000, 68.2], [10000, 70.9],
        [12100, 72.4], [13750, 71.6], [15900, 69.9], [17750, 70], [20000, 68.4]].map(p => [x(p[0]), y(p[1])]);
    let d = `M${data[0]}`;
    for (let i = 0; i < data.length - 1; i++) {
        const p0 = data[i - 1] || data[i], p1 = data[i], p2 = data[i + 1], p3 = data[i + 2] || p2;
        d += `C${p1[0] + (p2[0] - p0[0]) / 6} ${p1[1] + (p2[1] - p0[1]) / 6} ${p2[0] - (p3[0] - p1[0]) / 6} ${p2[1] - (p3[1] - p1[1]) / 6} ${p2}`;
    }
    out += `<path d="${d}" stroke="#e8e8e8" stroke-width="3"/>`;
    svg.innerHTML = out;
}

function drawAll() {
    drawImpulse();
    drawOverview();
    drawResponse();
}

window.addEventListener('resize', drawAll);
drawAll();
```
